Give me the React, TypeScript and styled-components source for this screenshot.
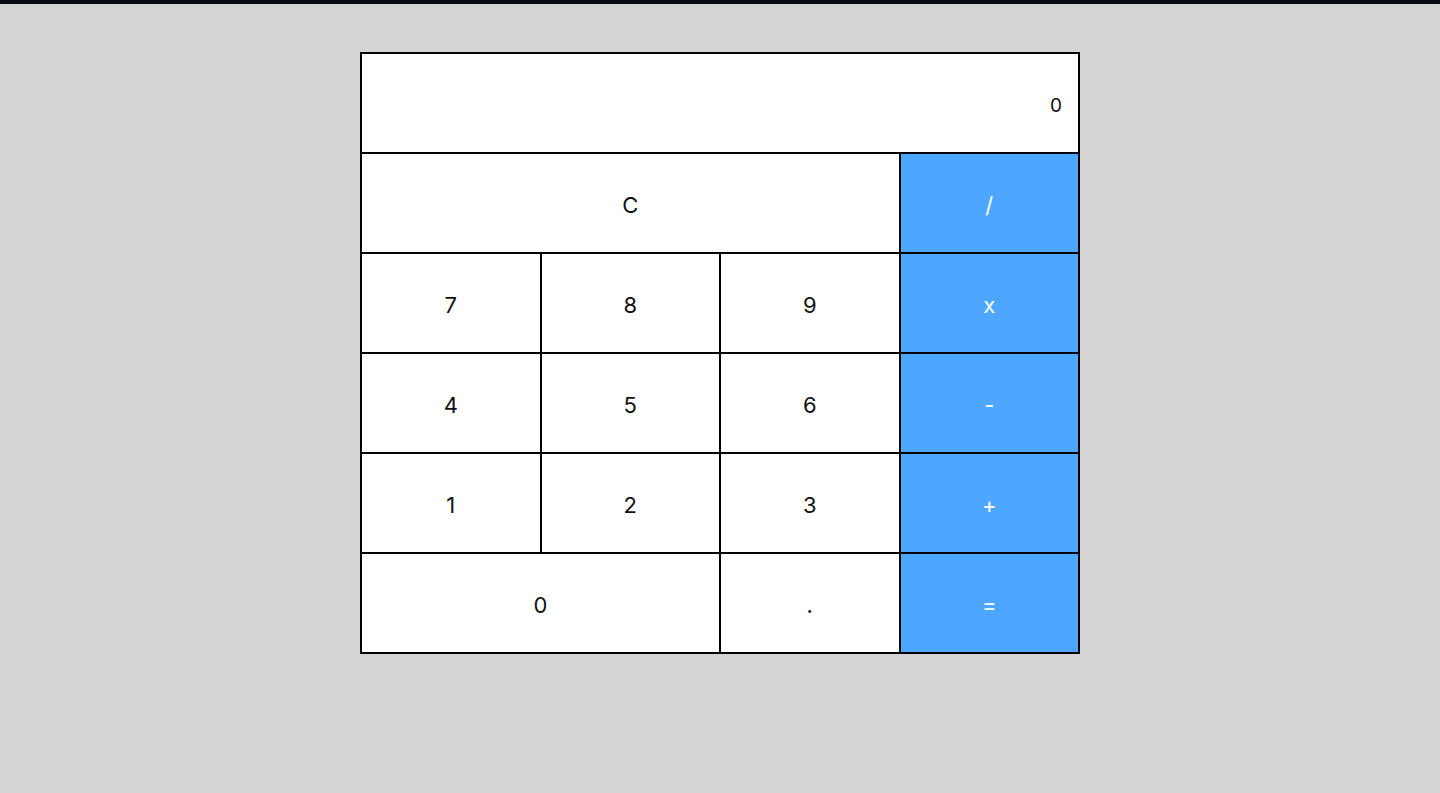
import styled, { createGlobalStyle } from "styled-components";

const Global = createGlobalStyle`
  html, body {
    margin: 0;
    padding: 0;
    background: #d4d4d4;
    font-family: Inter, "Noto Sans", sans-serif;
  }
`;

type Key = { label: string; span?: number; op?: boolean };

const keys: Key[] = [
  { label: "C", span: 3 },
  { label: "/", op: true },
  { label: "7" },
  { label: "8" },
  { label: "9" },
  { label: "x", op: true },
  { label: "4" },
  { label: "5" },
  { label: "6" },
  { label: "-", op: true },
  { label: "1" },
  { label: "2" },
  { label: "3" },
  { label: "+", op: true },
  { label: "0", span: 2 },
  { label: "." },
  { label: "=", op: true },
];

export default function App() {
  return (
    <>
      <Global />
      <S.Page>
        <S.TopStrip />
        <S.Calculator>
          <S.Display>0</S.Display>
          <S.Keys>
            {keys.map((k) => (
              <S.Key key={k.label} $span={k.span ?? 1} $op={!!k.op}>
                {k.label}
              </S.Key>
            ))}
          </S.Keys>
        </S.Calculator>
      </S.Page>
    </>
  );
}

const S = {
  Page: styled.div`
    min-height: 793px;
    display: flex;
    flex-direction: column;
    align-items: center;
  `,
  TopStrip: styled.div`
    align-self: stretch;
    height: 4px;
    background: #070a10;
  `,
  Calculator: styled.div`
    margin-top: 48px;
    width: 720px;
    box-sizing: border-box;
    border: 1px solid #000;
    background: #fff;
  `,
  Display: styled.div`
    height: 100px;
    box-sizing: border-box;
    border: 1px solid #000;
    display: flex;
    align-items: center;
    justify-content: flex-end;
    padding: 4px 16px 0 0;
    font-size: 19px;
    color: #111;
  `,
  Keys: styled.div`
    display: grid;
    grid-template-columns: repeat(4, 1fr);
    grid-auto-rows: 100px;
  `,
  Key: styled.button<{ $span: number; $op: boolean }>`
    grid-column: span ${(p) => p.$span};
    border: 1px solid #000;
    margin: 0;
    padding: 4px 0 0;
    background: ${(p) => (p.$op ? "#4da6ff" : "#fff")};
    color: ${(p) => (p.$op ? "#fff" : "#111")};
    font-family: Inter, "Noto Sans", sans-serif;
    font-size: 22px;
    cursor: pointer;
  `,
};
